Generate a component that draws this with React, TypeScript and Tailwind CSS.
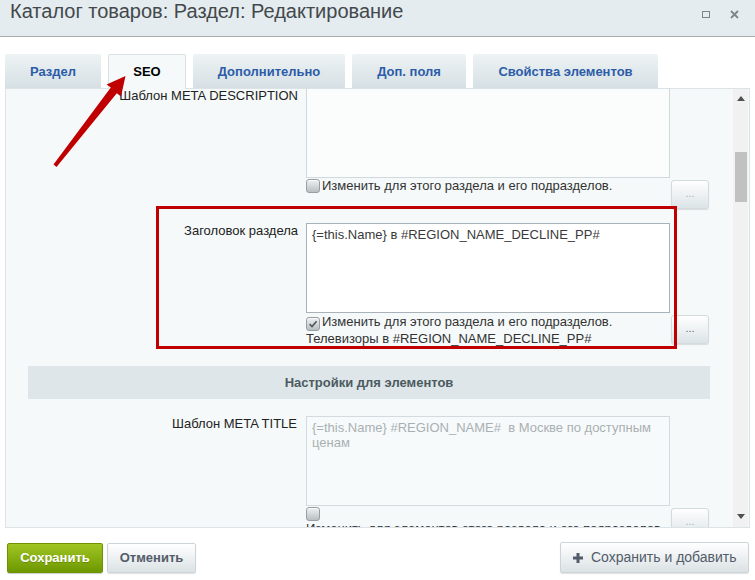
import React from "react";

type CheckProps = { checked?: boolean };

// Bitrix-style grey bevelled checkbox
const Checkbox = ({ checked = false }: CheckProps) => (
  <span className="inline-flex h-[14px] w-[14px] shrink-0 items-center justify-center rounded-[3px] border border-[#979fa4] bg-linear-to-b from-[#eef1f2] to-[#b8bfc3] align-[-3px] shadow-[inset_0_1px_0_rgba(255,255,255,0.7)]">
    {checked && (
      <svg width="10" height="10" viewBox="0 0 10 10">
        <path d="M1.6 5.2 L4 7.5 L8.6 2.3" fill="none" stroke="#4f565b" strokeWidth="1.6" />
      </svg>
    )}
  </span>
);

// Small "..." helper button shown next to each template field
const DotsButton = ({ dark = false }: { dark?: boolean }) => (
  <div
    className={`flex h-[29px] w-[38px] items-center justify-center rounded-[3px] border border-[#d3dbde] bg-linear-to-b from-white to-[#dce4e7] pb-[3px] text-[11px] leading-none shadow-[0_1px_1px_rgba(0,0,0,0.12)] ${
      dark ? "text-[#5d666c]" : "text-[#aab3b8]"
    }`}
  >
    ...
  </div>
);

type TabProps = { children: React.ReactNode; width: string; active?: boolean };

const Tab = ({ children, width, active = false }: TabProps) =>
  active ? (
    <div
      className={`${width} relative z-10 -mb-[1px] flex h-[35px] items-center justify-center rounded-t-[2px] border border-b-0 border-[#d9e1e4] bg-[#f5f9f9] pb-[1px] text-[13px] font-bold text-black`}
    >
      {children}
    </div>
  ) : (
    <div
      className={`${width} flex h-[34px] items-center justify-center rounded-t-[2px] bg-linear-to-b from-[#eef3f5] to-[#d6e0e4] text-[13px] font-bold text-[#2c5ca8]`}
    >
      {children}
    </div>
  );

const Scrollbar = () => (
  <div className="flex w-[15px] flex-col bg-[#f1f1f1]">
    <div className="flex h-[17px] items-center justify-center pt-[2px]">
      <svg width="8" height="5" viewBox="0 0 8 5">
        <polygon points="0,5 8,5 4,0" fill="#505050" />
      </svg>
    </div>
    <div className="flex-1">
      <div className="ml-[2px] mt-[46px] h-[50px] w-[12px] bg-[#c1c1c1]" />
    </div>
    <div className="flex h-[17px] items-center justify-center pb-[4px]">
      <svg width="8" height="5" viewBox="0 0 8 5">
        <polygon points="0,0 8,0 4,5" fill="#505050" />
      </svg>
    </div>
  </div>
);

export default function App() {
  return (
    <div className="relative h-[580px] w-[755px] overflow-hidden bg-white font-['Liberation_Sans',Arial,sans-serif] text-[13px] leading-[15px] text-[#222]">
      {/* dialog title bar */}
      <div className="flex h-[37px] items-start justify-between border-b border-[#a9abad] bg-[#e4ecef] pl-[10px] pr-[16px]">
        <div className="text-[20px] leading-[23px] text-[#43484c]">
          Каталог товаров: Раздел: Редактирование
        </div>
        <div className="flex items-center gap-[20px] pt-[10px]">
          <div className="h-[7px] w-[8px] border-[1.5px] border-[#7b868c]" />
          <svg width="9" height="9" viewBox="0 0 9 9">
            <path d="M1 1 L8 8 M8 1 L1 8" stroke="#7b868c" strokeWidth="1.8" />
          </svg>
        </div>
      </div>

      {/* tabs */}
      <div className="mt-[17px] flex gap-[7px] pl-[5px]">
        <Tab width="w-[96px]">Раздел</Tab>
        <Tab width="w-[78px]" active>
          SEO
        </Tab>
        <Tab width="w-[152px]">Дополнительно</Tab>
        <Tab width="w-[114px]">Доп. поля</Tab>
        <Tab width="w-[185px]">Свойства элементов</Tab>
      </div>

      {/* tab body with its scrollbar */}
      <div className="mx-[5px] flex h-[440px] border border-[#dbe3e6] bg-[#f5f9f9] pr-[1px]">
        <div className="flex-1 overflow-hidden">
          <div className="-mt-[1px]">
            {/* META DESCRIPTION */}
            <div className="flex">
              <div className="w-[300px] pr-[8px] text-right">Шаблон META DESCRIPTION</div>
              <div className="w-[364px]">
                <div className="h-[90px] border border-[#d0d9dc] bg-[#fbfcfc]" />
                <div className="flex items-center gap-[2px] text-[#333]">
                  <Checkbox />
                  <span>Изменить для этого раздела и его подразделов.</span>
                </div>
              </div>
              <div className="ml-[1px] pt-[92px]">
                <DotsButton />
              </div>
            </div>

            {/* section heading */}
            <div className="mt-[14px] flex">
              <div className="w-[300px] pr-[8px] text-right">Заголовок раздела</div>
              <div className="w-[364px]">
                <div className="h-[90px] border border-[#a8b3b9] bg-white px-[5px] pt-[3px] text-[#3a3a3a]">
                  {"{=this.Name} в #REGION_NAME_DECLINE_PP#"}
                </div>
                <div className="mt-[1px] text-[#333]">
                  <Checkbox checked />
                  <span className="ml-[2px]">Изменить для этого раздела и его подразделов.</span>
                  <br />
                  Телевизоры в #REGION_NAME_DECLINE_PP#
                </div>
              </div>
              <div className="ml-[1px] pt-[92px]">
                <DotsButton dark />
              </div>
            </div>

            {/* element settings group */}
            <div className="ml-[22px] mt-[20px] flex h-[33px] w-[682px] items-center justify-center bg-[#dfe6e9] font-bold text-[#4b5a61]">
              Настройки для элементов
            </div>

            {/* META TITLE */}
            <div className="mt-[17px] flex">
              <div className="w-[300px] pr-[9px] text-right">Шаблон META TITLE</div>
              <div className="w-[364px]">
                <div className="h-[90px] whitespace-pre-wrap border border-[#d3dbde] bg-[#f7fafa] px-[5px] pt-[3px] text-[#a9b0b4]">
                  {"{=this.Name} #REGION_NAME#  в Москве по доступным\nценам"}
                </div>
                <div className="text-[#333]">
                  <Checkbox />
                  <div>Изменить для элементов этого раздела и его подразделов.</div>
                </div>
              </div>
              <div className="ml-[1px] pt-[92px]">
                <DotsButton />
              </div>
            </div>
          </div>
        </div>
        <Scrollbar />
      </div>

      {/* dialog buttons */}
      <div className="mt-[14px] flex items-center justify-between pl-[7px] pr-[6px]">
        <div className="flex gap-[4px]">
          <div className="flex h-[30px] w-[96px] items-center justify-center rounded-[2px] border border-[#6f9300] bg-linear-to-b from-[#a0c621] to-[#6e9800] font-bold text-white shadow-[0_1px_1px_rgba(0,0,0,0.2)] [text-shadow:0_1px_0_rgba(0,0,0,0.2)]">
            Сохранить
          </div>
          <div className="flex h-[30px] w-[89px] items-center justify-center rounded-[2px] border border-[#cdd4d8] bg-linear-to-b from-white to-[#dbe2e5] font-bold text-[#535c69] shadow-[0_1px_1px_rgba(0,0,0,0.12)]">
            Отменить
          </div>
        </div>
        <div className="flex h-[31px] w-[189px] items-center gap-[8px] rounded-[2px] border border-[#cdd4d8] bg-linear-to-b from-white to-[#dbe2e5] pl-[12px] text-[14px] text-[#535c69] shadow-[0_1px_1px_rgba(0,0,0,0.12)]">
          <svg width="10" height="10" viewBox="0 0 10 10">
            <rect x="0" y="3.5" width="10" height="3" fill="#535c69" />
            <rect x="3.5" y="0" width="3" height="10" fill="#535c69" />
          </svg>
          <span>Сохранить и добавить</span>
        </div>
      </div>

      {/* red highlight frame around the section heading field */}
      <div className="pointer-events-none absolute left-[156px] top-[206px] z-20 h-[143px] w-[521px] border-[3px] border-[#c00000]" />

      {/* red pointer towards the SEO tab */}
      <svg
        className="pointer-events-none absolute left-[40px] top-[60px] z-20"
        width="100"
        height="120"
        viewBox="40 60 100 120"
      >
        <polygon
          points="125.5,76 121,96.5 116.8,93.2 56.5,167 53.5,164.6 110.8,87.6 106.6,84.4"
          fill="#c00000"
        />
      </svg>
    </div>
  );
}
